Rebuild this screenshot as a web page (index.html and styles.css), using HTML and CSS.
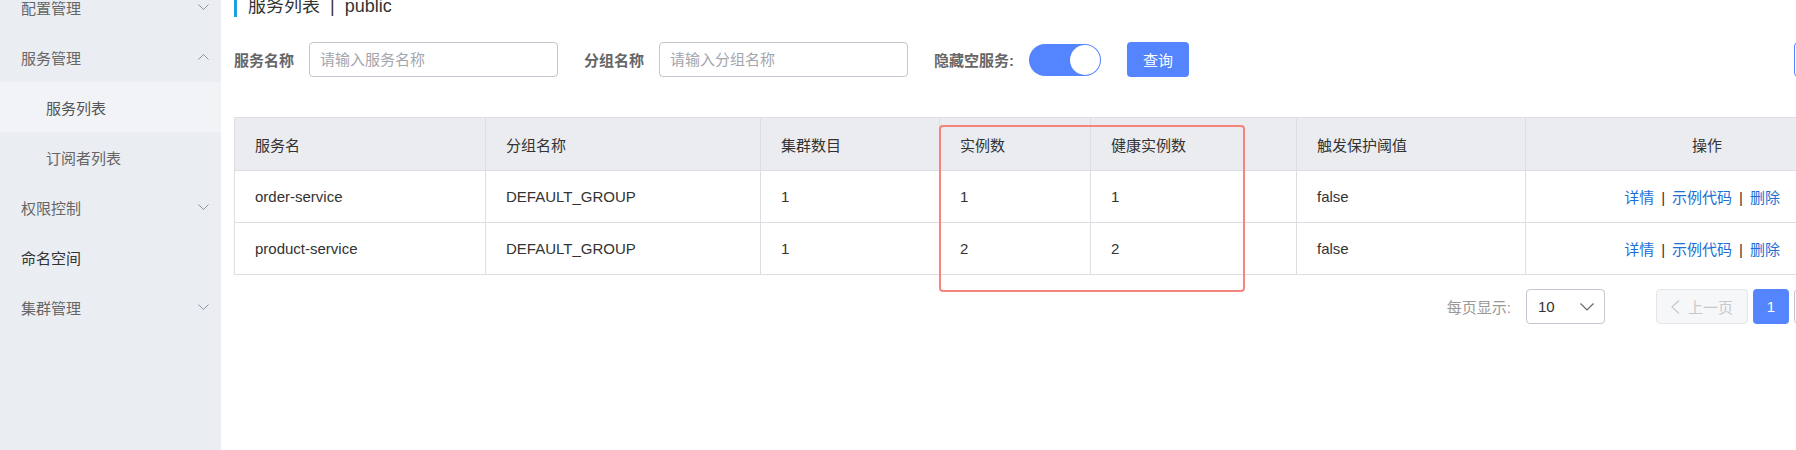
FILE: index.html
```html
<!DOCTYPE html>
<html>
<head>
  <title>服务列表</title>
  <meta name="viewport" content="width=device-width, initial-scale=1.0">
  <link rel="stylesheet" href="styles.css">
</head>
<body>
    <aside class="sidebar">
        <ul class="menu">
            <li class="menu-item">配置管理
                <svg class="arrow" width="11" height="6" viewBox="0 0 11 6"><polyline points="0.5,0.5 5.5,5.5 10.5,0.5"/></svg>
            </li>
            <li class="menu-item">服务管理
                <svg class="arrow" width="11" height="6" viewBox="0 0 11 6"><polyline points="0.5,5.5 5.5,0.5 10.5,5.5"/></svg>
            </li>
            <li class="menu-item sub active">服务列表</li>
            <li class="menu-item sub">订阅者列表</li>
            <li class="menu-item">权限控制
                <svg class="arrow" width="11" height="6" viewBox="0 0 11 6"><polyline points="0.5,0.5 5.5,5.5 10.5,0.5"/></svg>
            </li>
            <li class="menu-item leaf">命名空间</li>
            <li class="menu-item">集群管理
                <svg class="arrow" width="11" height="6" viewBox="0 0 11 6"><polyline points="0.5,0.5 5.5,5.5 10.5,0.5"/></svg>
            </li>
        </ul>
    </aside>

    <div class="main">
        <div class="content">
            <div class="page-title">
                <span>服务列表</span><span class="sep">|</span><span>public</span>
            </div>

            <div class="filter">
                <label class="filter-label">服务名称</label>
                <input class="filter-input" type="text" placeholder="请输入服务名称">
                <label class="filter-label">分组名称</label>
                <input class="filter-input" type="text" placeholder="请输入分组名称">
                <label class="filter-label">隐藏空服务:</label>
                <div class="switch"><span class="knob"></span></div>
                <button class="btn-primary">查询</button>
                <button class="btn-create">创建服务</button>
            </div>

            <div class="table-wrap">
                <table class="table">
                    <colgroup>
                        <col style="width:251px">
                        <col style="width:275px">
                        <col style="width:179px">
                        <col style="width:151px">
                        <col style="width:206px">
                        <col style="width:229px">
                        <col style="width:275px">
                    </colgroup>
                    <thead>
                        <tr>
                            <th>服务名</th>
                            <th>分组名称</th>
                            <th>集群数目</th>
                            <th>实例数</th>
                            <th>健康实例数</th>
                            <th>触发保护阈值</th>
                            <th class="op-head">操作</th>
                        </tr>
                    </thead>
                    <tbody>
                        <tr>
                            <td>order-service</td>
                            <td>DEFAULT_GROUP</td>
                            <td>1</td>
                            <td>1</td>
                            <td>1</td>
                            <td>false</td>
                            <td class="ops"><a href="#">详情</a><span class="bar">|</span><a href="#">示例代码</a><span class="bar">|</span><a href="#">删除</a></td>
                        </tr>
                        <tr>
                            <td>product-service</td>
                            <td>DEFAULT_GROUP</td>
                            <td>1</td>
                            <td>2</td>
                            <td>2</td>
                            <td>false</td>
                            <td class="ops"><a href="#">详情</a><span class="bar">|</span><a href="#">示例代码</a><span class="bar">|</span><a href="#">删除</a></td>
                        </tr>
                    </tbody>
                </table>
                <div class="mark"></div>
            </div>

            <div class="pager">
                <span class="pager-label">每页显示:</span>
                <div class="page-size">10
                    <svg width="14" height="8" viewBox="0 0 14 8"><polyline points="0.5,0.5 7,7 13.5,0.5"/></svg>
                </div>
                <button class="page-btn prev">
                    <svg width="9" height="14" viewBox="0 0 9 14"><polyline points="8,0.5 1,7 8,13.5"/></svg>上一页
                </button>
                <button class="page-btn current">1</button>
                <button class="page-btn next">下一页</button>
            </div>
        </div>
    </div>
</body>
</html>
```

FILE: styles.css
```css
body {
  margin: 0;
  display: flex;
  height: 100vh;
  overflow: hidden;
  font-family: "Liberation Sans", "Noto Sans CJK SC", sans-serif;
  font-size: 15px;
  color: #333;
  background: #fff;
}

/* sidebar */
.sidebar {
  width: 221px;
  flex: none;
  background: #eaedf1;
}
.menu {
  list-style: none;
  margin: -18px 0 0;
  padding: 0;
}
.menu-item {
  display: flex;
  align-items: center;
  justify-content: space-between;
  height: 50px;
  padding: 0 12px 0 21px;
  color: #666;
}
.menu-item.sub {
  padding-left: 46px;
}
.menu-item.active {
  background: #f2f3f7;
  color: #555;
}
.menu-item.leaf {
  color: #333;
}
.arrow polyline {
  fill: none;
  stroke: #8f939b;
  stroke-width: 1;
}

/* main */
.main {
  flex: 1;
  min-width: 0;
  overflow: hidden;
  padding-left: 13px;
}
.content {
  width: 1660px;
}
.page-title {
  margin-top: -5px;
  height: 22px;
  line-height: 22px;
  border-left: 3px solid #1ba0e1;
  padding-left: 11px;
  font-size: 18px;
  color: #333;
}
.page-title .sep {
  margin: 0 10px;
}

.filter {
  display: flex;
  align-items: center;
  height: 35px;
  margin-top: 25px;
}
.filter-label {
  font-weight: bold;
  color: #666;
  margin-right: 15px;
}
.filter-input {
  width: 249px;
  height: 35px;
  box-sizing: border-box;
  border: 1px solid #c4c6cf;
  border-radius: 4px;
  padding: 0 10px;
  margin-right: 26px;
  font-family: inherit;
  font-size: 15px;
  outline: none;
}
.filter-input::placeholder {
  color: #a3a6ad;
}
.switch {
  width: 72px;
  height: 32px;
  box-sizing: border-box;
  padding: 1px;
  border-radius: 16px;
  background: #5584ff;
  display: flex;
  justify-content: flex-end;
  margin-right: 26px;
}
.knob {
  width: 30px;
  height: 30px;
  border-radius: 50%;
  background: #fff;
}
.btn-primary {
  width: 62px;
  height: 35px;
  border: none;
  border-radius: 4px;
  background: #5584ff;
  color: #fff;
  font-family: inherit;
  font-size: 15px;
}
.btn-create {
  margin-left: auto;
  width: 100px;
  height: 35px;
  border: 1px solid #5584ff;
  border-radius: 4px;
  background: #fff;
  color: #5584ff;
  font-family: inherit;
  font-size: 15px;
}

/* table */
.table-wrap {
  position: relative;
  margin-top: 40px;
  width: 1566px;
}
.table {
  width: 1566px;
  table-layout: fixed;
  border-collapse: collapse;
}
.table th,
.table td {
  border: 1px solid #dcdee3;
  padding: 0 20px;
  text-align: left;
  font-weight: normal;
  white-space: nowrap;
}
.table th {
  height: 52px;
  background: #ebecf0;
  color: #333;
}
.table td {
  height: 51px;
}
.table th.op-head {
  text-align: right;
  padding-right: 78px;
}
.table td.ops {
  text-align: right;
}
.ops a {
  color: #1b6fd8;
  text-decoration: none;
}
.ops .bar {
  margin: 0 7px;
  color: #333;
}
.mark {
  position: absolute;
  left: 705px;
  top: 8px;
  width: 306px;
  height: 167px;
  box-sizing: border-box;
  border: 2px solid #f4847c;
  border-radius: 4px;
}

/* pager */
.pager {
  display: flex;
  justify-content: flex-end;
  align-items: center;
  margin-top: 14px;
  height: 35px;
}
.pager-label {
  color: #999;
  font-size: 15px;
}
.page-size {
  margin-left: 15px;
  width: 79px;
  height: 35px;
  box-sizing: border-box;
  border: 1px solid #c4c6cf;
  border-radius: 4px;
  padding: 0 10px 0 11px;
  display: flex;
  align-items: center;
  justify-content: space-between;
  color: #333;
}
.page-size polyline {
  fill: none;
  stroke: #666;
  stroke-width: 1.2;
}
.page-btn {
  height: 35px;
  box-sizing: border-box;
  border-radius: 4px;
  font-family: inherit;
  font-size: 15px;
  display: flex;
  align-items: center;
  justify-content: center;
}
.prev {
  margin-left: 51px;
  width: 92px;
  border: 1px solid #e4e6ea;
  background: #f6f7f9;
  color: #c8c8c8;
  gap: 8px;
}
.prev polyline {
  fill: none;
  stroke: #c8c8c8;
  stroke-width: 1.2;
}
.current {
  margin-left: 5px;
  width: 36px;
  border: none;
  background: #5584ff;
  color: #fff;
}
.next {
  margin-left: 5px;
  width: 100px;
  border: 1px solid #c4c6cf;
  background: #fff;
  color: #333;
}
```
